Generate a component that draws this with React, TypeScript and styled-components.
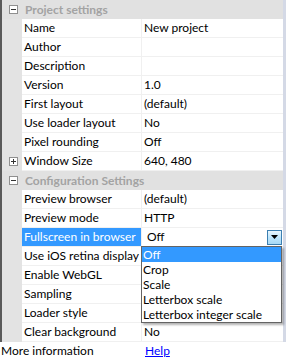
import React from "react";
import styled, { createGlobalStyle } from "styled-components";

const Global = createGlobalStyle`
  html, body { margin: 0; padding: 0; background: #ffffff; }
  body { font-family: Lato, "Noto Sans", sans-serif; font-size: 12px; }
`;

const Page = styled.div`
  width: 286px;
  height: 360px;
  display: flex;
  flex-direction: column;
  overflow: hidden;
`;

const Grid = styled.div`
  position: relative;
  display: flex;
  flex-direction: column;
  border-left: 2px solid #5a5a5a;
  border-right: 3px solid #d4d9e6;
  background: #e3e3e3;
`;

const HeaderRow = styled.div`
  height: 19px;
  display: grid;
  grid-template-columns: 20px 1fr;
  align-items: center;
  background: #e1e1e1;
`;

const HeaderText = styled.div`
  font-weight: 700;
  color: #a3a3a3;
  padding-left: 3px;
  white-space: nowrap;
  overflow: hidden;
`;

const Row = styled.div`
  height: 19px;
  display: grid;
  grid-template-columns: 20px 120px 1fr;
`;

const Gutter = styled.div`
  display: flex;
  align-items: center;
  justify-content: center;
  padding-left: 2px;
`;

const Label = styled.div<{ $selected?: boolean }>`
  height: 18px;
  line-height: 18px;
  padding-left: 2px;
  border-bottom: 1px solid #f0f0f0;
  border-right: 1px solid #f0f0f0;
  background: ${(p) => (p.$selected ? "#3399ff" : "#ffffff")};
  color: ${(p) => (p.$selected ? "#ffffff" : "#000000")};
  white-space: nowrap;
  overflow: hidden;
`;

const Value = styled.div<{ $editing?: boolean }>`
  height: 18px;
  line-height: 18px;
  padding-left: ${(p) => (p.$editing ? "5px" : "2px")};
  border-bottom: 1px solid #f0f0f0;
  background: #ffffff;
  color: #000000;
  white-space: nowrap;
  overflow: hidden;
  display: flex;
  align-items: center;
  justify-content: space-between;
`;

const Toggle = styled.div`
  width: 7px;
  height: 7px;
  border: 1px solid #8f8f8f;
  background: #ffffff;
  display: flex;
  align-items: center;
  justify-content: center;
`;

const DropButton = styled.div`
  width: 13px;
  height: 13px;
  margin-right: 1px;
  border: 1px solid #3c7fb1;
  background: linear-gradient(#eaf6fd, #bee6fd 50%, #a7d9f5);
  display: flex;
  align-items: center;
  justify-content: center;
`;

const List = styled.div`
  position: absolute;
  left: 139px;
  top: 246px;
  width: 139px;
  border: 1px solid #646464;
  background: #ffffff;
  box-shadow: 2px 2px 2px rgba(0, 0, 0, 0.3);
  display: flex;
  flex-direction: column;
`;

const Item = styled.div<{ $active?: boolean }>`
  height: 15px;
  line-height: 15px;
  padding-left: 1px;
  background: ${(p) => (p.$active ? "#3399ff" : "#ffffff")};
  color: ${(p) => (p.$active ? "#ffffff" : "#000000")};
  white-space: nowrap;
`;

const Info = styled.div`
  height: 18px;
  line-height: 18px;
  display: grid;
  grid-template-columns: 143px 1fr;
  background: #ffffff;
`;

const InfoLabel = styled.div`
  padding-left: 1px;
`;

const Link = styled.a`
  color: #0000ff;
  text-decoration: underline;
  padding-left: 2px;
`;

function Box({ plus }: { plus?: boolean }) {
  return (
    <Toggle>
      <svg width="7" height="7" viewBox="0 0 7 7">
        <rect x="1" y="3" width="5" height="1" fill="#333" />
        {plus && <rect x="3" y="1" width="1" height="5" fill="#333" />}
      </svg>
    </Toggle>
  );
}

type R = { label: string; value?: string; plus?: boolean };

const project: R[] = [
  { label: "Name", value: "New project" },
  { label: "Author", value: "" },
  { label: "Description", value: "" },
  { label: "Version", value: "1.0" },
  { label: "First layout", value: "(default)" },
  { label: "Use loader layout", value: "No" },
  { label: "Pixel rounding", value: "Off" },
  { label: "Window Size", value: "640, 480", plus: true },
];

const config: R[] = [
  { label: "Preview browser", value: "(default)" },
  { label: "Preview mode", value: "HTTP" },
];

const configRest: R[] = [
  { label: "Use iOS retina display", value: "" },
  { label: "Enable WebGL", value: "" },
  { label: "Sampling", value: "" },
  { label: "Loader style", value: "" },
  { label: "Clear background", value: "No" },
];

function PropRow({ r }: { r: R }) {
  return (
    <Row>
      <Gutter>{r.plus && <Box plus />}</Gutter>
      <Label>{r.label}</Label>
      <Value>{r.value}</Value>
    </Row>
  );
}

export default function App() {
  return (
    <Page>
      <Global />
      <Grid>
        <HeaderRow>
          <Gutter>
            <Box />
          </Gutter>
          <HeaderText>Project settings</HeaderText>
        </HeaderRow>
        {project.map((r) => (
          <PropRow key={r.label} r={r} />
        ))}
        <HeaderRow>
          <Gutter>
            <Box />
          </Gutter>
          <HeaderText>Configuration Settings</HeaderText>
        </HeaderRow>
        {config.map((r) => (
          <PropRow key={r.label} r={r} />
        ))}
        <Row>
          <Gutter />
          <Label $selected>Fullscreen in browser</Label>
          <Value $editing>
            <span>Off</span>
            <DropButton>
              <svg width="7" height="4" viewBox="0 0 7 4">
                <polygon points="0,0 7,0 3.5,4" fill="#000" />
              </svg>
            </DropButton>
          </Value>
        </Row>
        {configRest.map((r) => (
          <PropRow key={r.label} r={r} />
        ))}
        <List>
          <Item $active>Off</Item>
          <Item>Crop</Item>
          <Item>Scale</Item>
          <Item>Letterbox scale</Item>
          <Item>Letterbox integer scale</Item>
        </List>
      </Grid>
      <Info>
        <InfoLabel>More information</InfoLabel>
        <div>
          <Link href="#">Help</Link>
        </div>
      </Info>
    </Page>
  );
}
